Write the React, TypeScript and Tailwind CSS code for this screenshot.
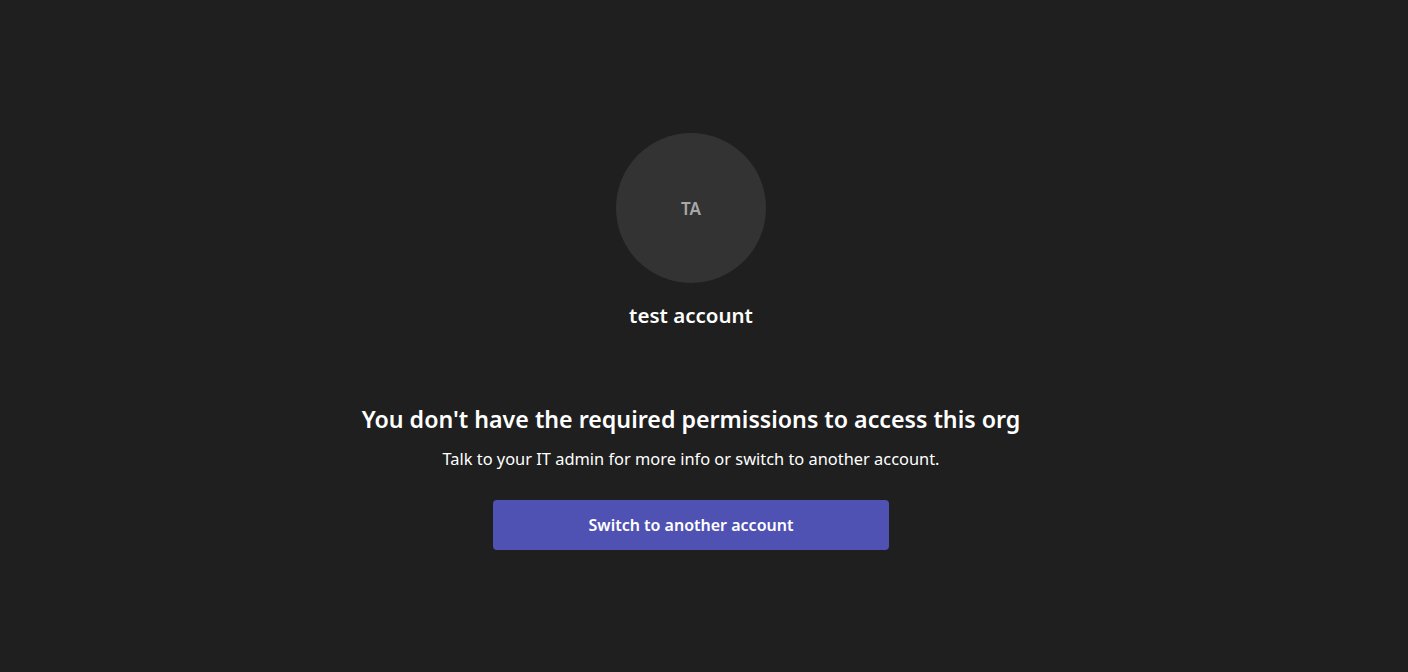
const App = () => {
  return (
    <div
      className="min-h-screen w-full bg-[#1f1f1f] flex flex-col items-center pt-[133px] pr-[26px]"
      style={{ fontFamily: '"Segoe UI", "Noto Sans", "Open Sans", sans-serif' }}
    >
      <div className="w-[150px] h-[150px] rounded-full bg-[#333333] flex items-center justify-center">
        <span className="mt-[2px] text-[17px] font-semibold text-[#a8a8a8]">TA</span>
      </div>
      <p className="mt-[18px] text-[20.5px] leading-[28px] font-semibold text-white">test account</p>

      <h1 className="mt-[74px] text-[23.2px] leading-[32px] font-semibold text-white">
        You don't have the required permissions to access this org
      </h1>
      <p className="mt-[12px] text-[16.4px] leading-[24px] text-white">
        Talk to your IT admin for more info or switch to another account.
      </p>

      <button
        type="button"
        className="mt-[29px] w-[396px] h-[50px] rounded-[4px] bg-[#4f52b2] text-white text-[16px] font-semibold"
      >
        Switch to another account
      </button>
    </div>
  );
};

export default App;
